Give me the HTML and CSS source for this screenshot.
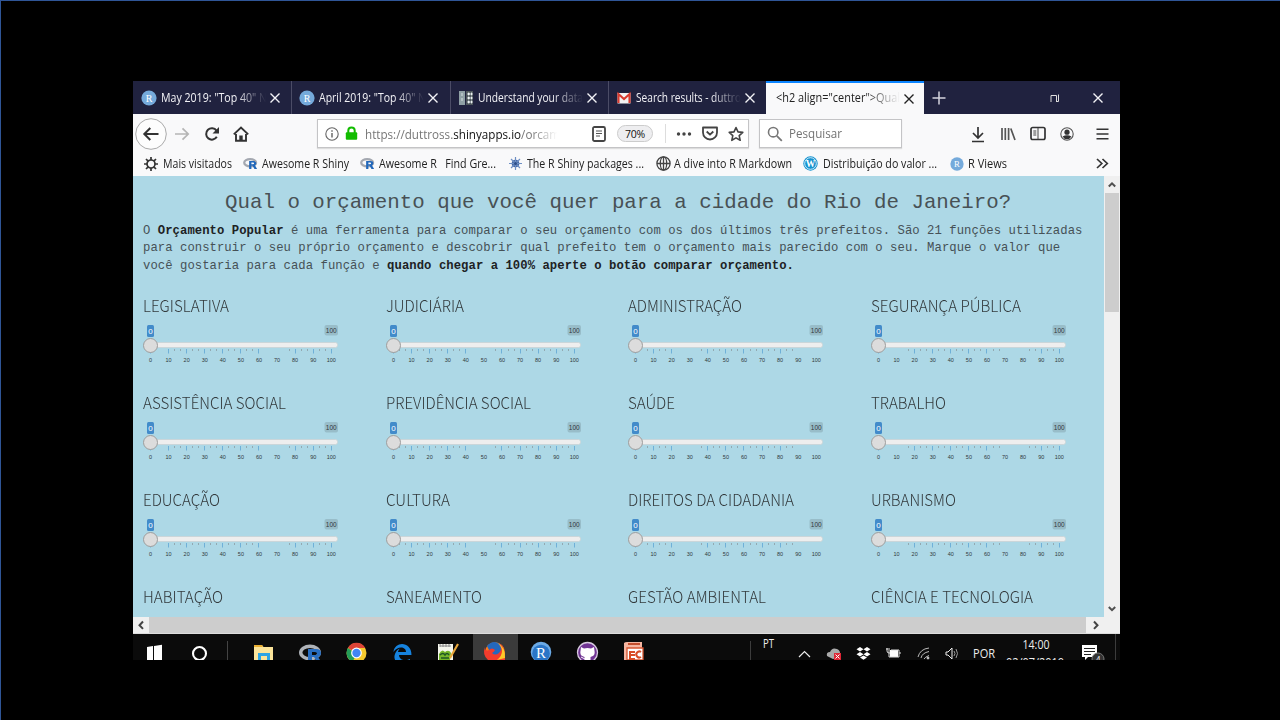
FILE: index.html
```html
<!DOCTYPE html>
<html lang="pt-BR">
<head>
<meta charset="utf-8">
<title>Orçamento Popular</title>
<link rel="stylesheet" href="styles.css">
</head>
<body>
<svg class="defs" width="0" height="0">
  <defs>
    <symbol id="x" viewBox="0 0 12 12"><path d="M1.5 1.5l9 9m0-9l-9 9" fill="none" stroke="currentColor" stroke-width="1.4"/></symbol>
    <symbol id="ball" viewBox="0 0 16 16"><circle cx="8" cy="8" r="7.6" fill="#75aadb"/><text x="8" y="11.6" text-anchor="middle" font-family="Liberation Serif,serif" font-size="10" fill="#fff">R</text></symbol>
    <symbol id="rlogo" viewBox="0 0 22 17"><ellipse cx="10.5" cy="7.3" rx="8.7" ry="5.3" fill="none" stroke="#a4a8b0" stroke-width="3.3"/><path d="M9 5h6.5q4 0 4 3.2 0 2.3-2 3l3.2 5.3h-3.8l-3.2-5h-1.4v5H9zM12.3 7.2v2.4h2.5q1.5 0 1.5-1.2t-1.5-1.2z" fill="#2167ba" fill-rule="evenodd"/></symbol>
  </defs>
</svg>
<main class="desktop">
  <header class="tabs">
    <div class="tab t1"><svg class="fav"><use href="#ball"/></svg><span class="label"><span data-w="106">May 2019: "Top 40" N</span></span><svg class="close"><use href="#x"/></svg></div>
    <div class="tab"><svg class="fav"><use href="#ball"/></svg><span class="label"><span data-w="107">April 2019: "Top 40" N</span></span><svg class="close"><use href="#x"/></svg></div>
    <div class="tab"><svg class="fav" viewBox="0 0 16 16"><path d="M1 1h6v14H1z" fill="#8fa0a5"/><path d="M8 1h7v14H8z" fill="#4d565b"/><path d="M4 3v3M4 8v3M10 3h1.3v2H10zm3 0h1v2h-1zM10 7h1.3v2H10zm3 0h1v2h-1zM10 11h1.3v2H10zm3 0h1v2h-1z" stroke="#e8f0f1" stroke-width=".8" fill="#fff"/></svg><span class="label"><span data-w="105">Understand your data</span></span><svg class="close"><use href="#x"/></svg></div>
    <div class="tab"><svg class="fav" viewBox="0 0 16 16"><path d="M1.5 3h13v10.500h-13z" fill="#f3f3f3"/><path d="M2.500 13V4L8 9l5.500-5v9" fill="none" stroke="#d93a2f" stroke-width="2.100"/></svg><span class="label"><span data-w="105">Search results - duttro</span></span><svg class="close"><use href="#x"/></svg></div>
    <div class="tab active"><span class="label"><span data-w="124">&lt;h2 align="center"&gt;Qual</span></span><svg class="close"><use href="#x"/></svg></div>
    <svg class="plus" viewBox="0 0 14 14"><path d="M7 .5v13M.5 7h13" stroke="#d4d4de" stroke-width="1.5"/></svg>
    <svg class="restore" viewBox="0 0 10 10"><path d="M1 9V2.500h5.500V9M6.500 8.500h2V1.500" fill="none" stroke="#ddd" stroke-width="1"/></svg>
    <svg class="quit"><use href="#x"/></svg>
  </header>
  <nav class="toolbar">
    <div class="navicons">
      <svg width="34" height="34" viewBox="0 0 34 34"><circle cx="17" cy="17" r="15.3" fill="#fdfdfd" stroke="#aaa"/><path d="M24.5 17H10.800M16.300 11l-6 6 6 6" fill="none" stroke="#333" stroke-width="2"/></svg>
      <svg width="18" height="16" viewBox="0 0 18 16"><path d="M2 8h13M9.500 2.300L15.200 8l-5.700 5.700" fill="none" stroke="#b5b5b5" stroke-width="1.700"/></svg>
      <svg class="reload" width="16" height="16" viewBox="0 0 16 16"><path d="M12.800 10.800A5.700 5.700 0 1 1 12.500 4.600" fill="none" stroke="#333" stroke-width="2"/><path d="M15 1v6.500H8.500z" fill="#333"/></svg>
      <svg class="home" width="16" height="16" viewBox="0 0 16 16"><path d="M.8 8.400L8 1.500l7.200 6.900M3 8v6.800h10V8" fill="none" stroke="#333" stroke-width="1.900"/><path d="M6.300 9.500h3.400V15H6.300z" fill="#333"/></svg>
    </div>
    <div class="urlbar">
      <svg width="14" height="14" viewBox="0 0 14 14"><circle cx="7" cy="7" r="6.2" fill="none" stroke="#666" stroke-width="1.1"/><path d="M7 6v4.500M7 3.200v1.500" stroke="#555" stroke-width="1.3"/></svg>
      <svg class="lock" width="13" height="15" viewBox="0 0 13 15"><path d="M3.300 7V4.500q0-3 3.200-3t3.200 3V7" fill="none" stroke="#12bc00" stroke-width="2"/><rect x=".8" y="6.300" width="11.400" height="7.500" rx="1" fill="#12bc00"/></svg>
      <span class="url"><span data-w="195">https://duttross.<b>shinyapps.io</b>/orcam</span></span>
      <svg class="reader" width="14" height="16" viewBox="0 0 14 16"><rect x="1" y="1" width="12" height="14" rx="1.500" fill="none" stroke="#444" stroke-width="1.800"/><path d="M4 5h6M4 7.500h6M4 10h4" stroke="#555"/></svg>
      <span class="pill">70%</span>
      <i class="rule"></i>
      <svg class="dots" width="16" height="4" viewBox="0 0 16 4"><circle cx="2.500" cy="2" r="1.700"/><circle cx="8" cy="2" r="1.700"/><circle cx="13.500" cy="2" r="1.700"/></svg>
      <svg class="pocket" width="16" height="15" viewBox="0 0 16 15"><path d="M1 1.500h14v5a7 7 0 0 1-14 0zM4.700 5.500L8 8.700l3.300-3.200" fill="none" stroke="#444" stroke-width="1.800" stroke-linejoin="round"/></svg>
      <svg class="star" width="16" height="16" viewBox="0 0 16 16"><path d="M8 1.500l2 4.400 4.800.5-3.600 3.200 1 4.700L8 11.900l-4.200 2.400 1-4.700L1.200 6.400 6 5.900z" fill="none" stroke="#444" stroke-width="1.600" stroke-linejoin="round"/></svg>
    </div>
    <div class="search"><svg width="16" height="16" viewBox="0 0 16 16"><circle cx="6.200" cy="6.200" r="4.700" fill="none" stroke="#777" stroke-width="1.600"/><path d="M9.800 9.800l5 5" stroke="#777" stroke-width="1.800"/></svg><span data-w="53">Pesquisar</span></div>
    <div class="tools">
      <svg width="14" height="18" viewBox="0 0 14 18"><path d="M7 2v11M2 8l5 5 5-5M1 16.500h12" fill="none" stroke="#333" stroke-width="1.700"/></svg>
      <svg class="lib" width="16" height="16" viewBox="0 0 16 16"><path d="M2 2v12M5.300 2v12M8.600 2v12M10.800 2.500L15 14" stroke="#555" stroke-width="1.700"/></svg>
      <svg class="side" width="16" height="15" viewBox="0 0 16 15"><rect x="1" y="1.500" width="14" height="12" rx="1.700" fill="none" stroke="#333" stroke-width="1.700"/><path d="M8 2v11M3.300 5h3M3.300 7h3M3.300 9h3" stroke="#444"/></svg>
      <svg class="acct" width="14" height="14" viewBox="0 0 14 14"><circle cx="7" cy="7" r="6.200" fill="none" stroke="#555" stroke-width="1.100"/><circle cx="7" cy="5.200" r="2.600" fill="#333"/><path d="M2.600 9.500q4.400-2.600 8.800 0Q10 12.200 7 12.200T2.600 9.500" fill="#333"/></svg>
      <svg class="menu" width="13" height="12" viewBox="0 0 13 12"><path d="M.5 1.200h12M.5 6h12M.5 10.800h12" stroke="#333" stroke-width="1.600"/></svg>
    </div>
  </nav>
  <nav class="bookmarks">
    <a class="m1"><svg width="14" height="14" viewBox="0 0 14 14"><circle cx="7" cy="7" r="4" fill="none" stroke="#333" stroke-width="1.700"/><path d="M7 0v3M7 11v3M0 7h3M11 7h3M2 2l2.200 2.200M9.800 9.800L12 12M12 2L9.800 4.200M4.200 9.800L2 12" stroke="#333" stroke-width="1.700"/></svg><span data-w="69">Mais visitados</span></a>
    <a class="m2"><svg width="15" height="13"><use href="#rlogo"/></svg><span data-w="87">Awesome R Shiny</span></a>
    <a class="m3"><svg width="15" height="13"><use href="#rlogo"/></svg><span data-w="117">Awesome R &nbsp; Find Gre...</span></a>
    <a class="m4"><svg width="13" height="13" viewBox="0 0 13 13"><circle cx="6.500" cy="6.500" r="3.800" fill="#4668a5"/><path d="M6.500 0v13M0 6.500h13M2 2l9 9M11 2l-9 9" stroke="#6e8fc4" stroke-width="1.200"/><circle cx="6.500" cy="6.500" r="1.500" fill="#2c4d88"/></svg><span data-w="117">The R Shiny packages ...</span></a>
    <a class="m5"><svg width="15" height="15" viewBox="0 0 15 15"><g fill="none" stroke="#444" stroke-width="1.300"><circle cx="7.500" cy="7.500" r="6.600"/><ellipse cx="7.500" cy="7.500" rx="3.200" ry="6.600"/><path d="M1 7.500h13M7.500 1v13"/></g></svg><span data-w="118">A dive into R Markdown</span></a>
    <a class="m6"><svg width="15" height="15" viewBox="0 0 15 15"><circle cx="7.500" cy="7.500" r="7.200" fill="#1593d0"/><circle cx="7.500" cy="7.500" r="5.800" fill="none" stroke="#fff" stroke-width=".8"/><text x="7.500" y="11.100" text-anchor="middle" font-family="Liberation Serif,serif" font-weight="bold" font-size="9.500" fill="#fff">W</text></svg><span data-w="114">Distribuição do valor ...</span></a>
    <a class="m7"><svg width="14" height="14"><use href="#ball"/></svg><span data-w="39">R Views</span></a>
    <svg class="more" width="13" height="11" viewBox="0 0 13 11"><path d="M1 1l4.800 4.500L1 10M6.500 1l4.800 4.500L6.500 10" fill="none" stroke="#333" stroke-width="1.700"/></svg>
  </nav>
  <section class="view">
    <article class="page">
      <h2>Qual o orçamento que você quer para a cidade do Rio de Janeiro?</h2>
      <p>O <b>Orçamento Popular</b> é uma ferramenta para comparar o seu orçamento com os dos últimos três prefeitos. São 21 funções utilizadas<br>para construir o seu próprio orçamento e descobrir qual prefeito tem o orçamento mais parecido com o seu. Marque o valor que<br>você gostaria para cada função e <b>quando chegar a 100% aperte o botão comparar orçamento.</b></p>
      <div class="grid" id="grid"></div>
    </article>
    <div class="vbar"><svg width="16" height="17" viewBox="0 0 16 17"><path d="M4.800 10.500L8 7.300l3.200 3.200" fill="none" stroke="#505050" stroke-width="2"/></svg><i></i><svg class="down" width="16" height="17" viewBox="0 0 16 17"><path d="M4.800 7L8 10.200 11.200 7" fill="none" stroke="#505050" stroke-width="2"/></svg></div>
  </section>
  <div class="hbar"><svg width="16" height="16" viewBox="0 0 16 16"><path d="M10 4.500L6.500 8.200l3.500 3.700" fill="none" stroke="#444" stroke-width="2"/></svg><i></i><svg width="19" height="16" viewBox="0 0 19 16"><path d="M8 4.500l3.500 3.700L8 11.900" fill="none" stroke="#444" stroke-width="2"/></svg><b></b></div>
  <footer class="taskbar">
    <svg viewBox="0 0 540 26" width="540" height="26">
      <rect x="340" width="45" height="26" fill="#3b3b3b"/>
      <path d="M14 13l6-1v14h-6zM21 12l8-1.200V26h-8z" fill="#fff"/>
      <circle cx="66.500" cy="19.500" r="6.500" fill="none" stroke="#fff" stroke-width="2.100"/>
      <path d="M94.500 7v19" stroke="#444"/>
      <path d="M121 26V11h8l1.500 2H140v13z" fill="#fbe49a"/><path d="M121 11h8l1 2h-9z" fill="#e8ae31"/><path d="M125 26v-7h12v7h-3v-4h-6v4z" fill="#2ca4e4"/>
      <ellipse cx="177" cy="18.500" rx="9.300" ry="6.300" fill="none" stroke="#aeb2b8" stroke-width="3.400"/><path d="M175 15h8q5 0 5 4 0 3-3 4l2 3h-4l-2-3h-2v3h-4zM179 18v3h3q2 0 2-1.500t-2-1.500z" fill="#286dc0" fill-rule="evenodd"/>
      <circle cx="223.500" cy="19" r="10" fill="#f5c92e"/><path d="M223.500 19L214.800 14A10 10 0 0 1 232.300 14H223.500z" fill="#dc4437"/><path d="M214.800 14A10 10 0 0 0 219.500 28L223.500 20z" fill="#249d58"/><circle cx="223.500" cy="19" r="5.400" fill="#fff"/><circle cx="223.500" cy="19" r="4.200" fill="#4285f4"/>
      <path d="M260.500 18c1-11 18-11 18 3h-12.500c0 5 6 6.500 11 4v4c-9 4-18-1-15-9 1-3 3-5 5-5.500-1 1-2 2.500-2 3.500h8c0-6-9-6-12.500 0z" fill="#1683df"/>
      <path d="M305 10h15v16h-15z" fill="#f5f6ed"/><path d="M307 12h11M307 10v3M310 10v3M313 10v3M316 10v3" stroke="#888"/><path d="M306 20q3-6 6-2 4-3 6 1l-1 7h-11z" fill="#75b62a"/><path d="M307 21q3-3 5 0 2-3 4 0M308 24h8" stroke="#205624" stroke-width="1.500" fill="none"/><path d="M325 10l-8 14" stroke="#e7a63a" stroke-width="2.200"/>
      <circle cx="362" cy="18" r="9.800" fill="#ff7b16"/><path d="M354 12q7-8 15 0 4 7-2 11-6 2-9-3z" fill="#2468bd"/><path d="M352 13q0 5 4 3 3-3 6 0-1 2-3 3 3 3 7 0 4-4 0-10 7 4 6 17h-17q-6-5-3-13z" fill="#f33c2d"/><path d="M363 8q10 5 9 16l-8 2q5-4 5-9t-6-9z" fill="#ffc928"/>
      <circle cx="408" cy="18" r="10.300" fill="#6baae6"/><circle cx="408" cy="19.500" r="8.800" fill="#2a75c7"/><text x="408" y="24" text-anchor="middle" font-family="Liberation Serif,serif" font-size="15" fill="#fff">R</text>
      <circle cx="454.500" cy="18.500" r="10" fill="#713494" stroke="#d8cbe0" stroke-width="1.300"/><path d="M448 13l3 1.500q3.500-1 7 0l3-1.500 .500 4q1 5-4 6V27h-6v-4q-5-1-4-6z" fill="#fff"/><path d="M448 23l4 2" stroke="#fff"/>
      <path d="M491 9q1-1 3-1h15v18h-18z" fill="#f6b5a0"/><path d="M495 10h12" stroke="#c44e2c" stroke-width="2"/><path d="M494 14h16v12h-16z" fill="#fff" stroke="#d65631" stroke-width="1.300"/><path d="M496 17h6v2h-4v1h4v2h-4v2h4v2h-6z" fill="#d84d26"/><path d="M508 18a3 3 0 1 0 0 5" fill="none" stroke="#d84d26" stroke-width="2"/>
    </svg>
    <svg class="tray" viewBox="740 634 380 26" width="380" height="26">
      <path d="M750.500 641v19M1115.500 634v26" stroke="#3c3c3c"/>
      <text x="763" y="648" font-size="12" textLength="11" lengthAdjust="spacingAndGlyphs">PT</text>
      <path d="M799 657l5.500-5.500 5.500 5.500" fill="none" stroke="#eee" stroke-width="1.200"/>
      <path d="M827 656q-1-4 3-4 2-5 7-3 4 1 3 8l-7 2z" fill="#aaa"/><rect x="834" y="653" width="7" height="7" fill="#df2636"/><path d="M835.500 654.500l4 4m0-4l-4 4" stroke="#fff"/>
      <path d="M860 647l3.500 2.200-3.500 2.200-3.500-2.200zM867 647l3.500 2.200-3.500 2.200-3.500-2.200zM860 652l3.500 2.200-3.500 2.200-3.500-2.200zM867 652l3.500 2.200-3.500 2.200-3.500-2.200zM863.500 655.500l3.500 2-3.500 2.300-3.500-2.300z" fill="#fff"/>
      <path d="M890 650h8v7h-8z" fill="#fff"/><path d="M887 648v3q0 2 2 2h1M886 649h4M889 650v7h10v-7h-8M900 652v2" fill="none" stroke="#ddd"/>
      <g fill="none" stroke="#bbb"><path d="M918 657q2-8 11-9M921 658q1-5 8-6.500M924 659q1-2 5-3.500"/><circle cx="928" cy="658" r="1" fill="#fff"/><path d="M946 652h2l4-4v11l-4-4h-2z" stroke="#eee"/><path d="M954 651q2 2.500 0 5M956 649q3 4.500 0 9" stroke="#999"/></g>
      <text x="973" y="658" font-size="12.500" textLength="22" lengthAdjust="spacingAndGlyphs">POR</text>
      <text x="1022.500" y="649" font-size="12" textLength="27" lengthAdjust="spacingAndGlyphs">14:00</text>
      <text x="1006" y="666.500" font-size="12" textLength="58" lengthAdjust="spacingAndGlyphs">02/07/2019</text>
      <path d="M1082 645h15v12h-9l-3 3v-3h-3z" fill="#fff"/><path d="M1084 648.500h11M1084 651.500h11M1084 654.500h7" stroke="#222"/><circle cx="1098" cy="659" r="6" fill="#333" stroke="#777"/><text x="1098" y="663" text-anchor="middle" font-size="9">4</text>
    </svg>
  </footer>
</main>
<script src="app.js"></script>
</body>
</html>
```
FILE: styles.css
```css
* { box-sizing: border-box; }
html, body { margin: 0; height: 720px; overflow: hidden; background: #000; }
body { border-top: 1px solid #2f5597; border-left: 1px solid #2f5597; font-family: "Open Sans", "Noto Sans", sans-serif; }
.defs { display: block; }
svg { flex: none; display: block; }
.desktop { margin: 80px 0 0 132px; width: 987px; height: 579px; overflow: hidden; display: flex; flex-direction: column; background: #f9f9fa; }
[data-w] { white-space: nowrap; display: inline-block; transform-origin: left center; }

.tabs { height: 33px; flex: none; background: #20223f; display: flex; align-items: center; color: #f3f3f7; }
.tab { width: 158.300px; height: 33px; flex: none; display: flex; align-items: center; padding-left: 7px; border-left: 1px solid #4b4c66; font-size: 12px; }
.tab.t1 { border-left-color: #20223f; }
.fav { width: 16px; height: 16px; }
.label { width: 105px; height: 20px; line-height: 20px; margin-left: 4px; overflow: hidden; -webkit-mask-image: linear-gradient(90deg, #000 72%, transparent 100%); mask-image: linear-gradient(90deg, #000 72%, transparent 100%); }
.close { width: 12px; height: 12px; margin-left: 3px; }
.tab.active { background: #f9f9fa; color: #222; border-left: 0; border-top: 2px solid #0a84ff; padding-left: 10px; }
.active .label { width: 124px; margin-left: 0; height: 22px; line-height: 20px; }
.plus { width: 14px; height: 14px; margin-left: 8px; }
.restore { width: 10px; height: 10px; margin-left: 104px; }
.quit { width: 12px; height: 12px; margin-left: 32px; }

.toolbar { height: 39px; flex: none; display: flex; align-items: center; }
.navicons { width: 184px; display: flex; align-items: center; padding-left: 1px; }
.navicons svg + svg { margin-left: 5px; }
.navicons .reload { margin-left: 13px; }
.navicons .home { margin-left: 13px; }
.urlbar { width: 432px; height: 29px; background: #fff; border: 1px solid #c4c4c6; box-shadow: 0 1px 1px #ddd; display: flex; align-items: center; padding-left: 7px; }
.lock { margin-left: 6px; }
.url { margin-left: 7px; width: 192px; overflow: hidden; font-size: 13.500px; line-height: 22px; color: #777; -webkit-mask-image: linear-gradient(90deg, #000 87%, transparent); mask-image: linear-gradient(90deg, #000 87%, transparent); }
.url b { font-weight: 400; color: #111; }
.reader { margin-left: 35px; }
.pill { margin-left: 11px; width: 36px; height: 17px; line-height: 16px; border: 1px solid #ccc; border-radius: 9px; background: #eeeef0; text-align: center; font-size: 10.500px; color: #111; letter-spacing: -.3px; }
.rule { width: 1px; height: 19px; background: #ddd; margin-left: 12px; }
.dots { margin-left: 10px; fill: #444; }
.pocket { margin-left: 10px; }
.star { margin-left: 10px; }
.search { margin-left: 10px; width: 143px; height: 29px; border: 1px solid #c4c4c6; box-shadow: 0 1px 1px #ddd; background: #fff; display: flex; align-items: center; padding-left: 7px; font-size: 12.500px; color: #737373; gap: 6px; }
.tools { display: flex; align-items: center; margin-left: 69px; }
.lib { margin-left: 15px; }
.side { margin-left: 14px; }
.acct { margin-left: 14px; }
.menu { margin-left: 22px; }

.bookmarks { flex: none; height: 23px; padding-bottom: 2px; display: flex; align-items: center; padding-left: 11px; font-size: 12px; color: #222; }
.bookmarks a { display: flex; align-items: center; gap: 5px; line-height: 18px; }
.bookmarks .m2, .bookmarks .m3 { gap: 4px; }
.m2 { margin-left: 11px; }
.m3 { margin-left: 11px; }
.m4 { margin-left: 13px; }
.m5 { margin-left: 12px; }
.bookmarks .m5 { gap: 3px; }
.m6 { margin-left: 11px; }
.m7 { margin-left: 13px; }
.bookmarks .m7 { gap: 4px; }
.more { margin-left: 89px; }

.view { height: 441px; flex: none; display: flex; }
.page { width: 971px; height: 441px; overflow: hidden; background: #add8e6; padding-left: 10px; }
.page h2 { margin: 13px 0 0 82px; height: 32px; font: 400 20.800px/28px "Liberation Mono", monospace; color: #485155; white-space: nowrap; }
.page p { margin: 2px 0 0; font: 12.250px/17.250px "Liberation Mono", monospace; letter-spacing: .046px; color: #465156; white-space: nowrap; }
.page p b { color: #1d2224; }
.grid { margin-top: 17px; display: grid; grid-template-columns: repeat(4, 242.700px); grid-auto-rows: 97.200px; }
.cell h4 { margin: 0 0 4px; height: 26px; font: 300 16.500px/26px "Noto Sans CJK SC", "Noto Sans CJK JP", sans-serif; color: #333a3d; white-space: nowrap; }
.slider text { font-family: "Liberation Sans", sans-serif; font-size: 5.500px; text-anchor: middle; fill: #30383b; }
.slider .from { fill: #fff; font-size: 8px; }
.slider .max { font-size: 6.500px; }
.vbar { width: 16px; height: 441px; background: #f0f0f0; display: flex; flex-direction: column; align-items: center; }
.vbar i { width: 14px; height: 119px; background: #cdcdcd; }
.vbar .down { margin-top: auto; }
.hbar { height: 17px; flex: none; display: flex; align-items: center; background: #f0f0f0; border-bottom: 1px solid #ddd; }
.hbar i { flex: 1; height: 16px; background: #cdcdcd; }
.hbar b { width: 15px; height: 16px; }
.taskbar { height: 26px; flex: none; background: #0b0b0b; display: flex; justify-content: space-between; }
.tray text { fill: #eee; font-family: "Open Sans", sans-serif; }
```
FILE: app.js
```js
const names = ["LEGISLATIVA", "JUDICIÁRIA", "ADMINISTRAÇÃO", "SEGURANÇA PÚBLICA",
  "ASSISTÊNCIA SOCIAL", "PREVIDÊNCIA SOCIAL", "SAÚDE", "TRABALHO",
  "EDUCAÇÃO", "CULTURA", "DIREITOS DA CIDADANIA", "URBANISMO",
  "HABITAÇÃO", "SANEAMENTO", "GESTÃO AMBIENTAL", "CIÊNCIA E TECNOLOGIA"];
const widths = [86, 78, 114, 150, 143, 145, 47, 75, 77, 64, 166, 85, 80, 96, 138, 162];
// Percent ranges of each column's scale that carry tick marks
const ranges = [[[10, 60], [76, 100]], [[3, 40], [56, 100]], [[6, 20], [36, 87]], [[16, 67], [83, 100]]];

function slider(col) {
  let s = '<svg class="slider" width="200" height="46" viewBox="0 0 200 46">';
  s += '<rect x="2" y="20.500" width="192.500" height="5" rx="2" fill="#eee" stroke="#c9d3d6" stroke-width=".8"/>';
  for (let i = 0; i <= 30; i++) {
    const v = i * 10 / 3, x = 7.5 + v * 1.808, major = i % 3 === 0;
    const on = v === 0 || ranges[col].some(r => v >= r[0] - .1 && v <= r[1] + .1);
    if (on) s += `<path d="M${Math.floor(x) + .5} 27v${major ? 4.5 : 2}" stroke="${major ? '#6fb0d8' : '#93a9b1'}"/>`;
    if (major) s += `<text x="${x}" y="39.500">${Math.round(v)}</text>`;
  }
  s += '<rect x="4" y="3" width="7" height="12" rx="1.500" fill="#428bca"/><text class="from" x="7.500" y="12">0</text>';
  s += '<rect x="181.500" y="3" width="13.500" height="10.500" rx="2" fill="#98bdc9"/><text class="max" x="188.200" y="10.500">100</text>';
  s += '<circle cx="7.500" cy="23.500" r="7" fill="#dcdcdc" stroke="#9d9d9d"/></svg>';
  return s;
}

// The last row shows only its headings above the fold
document.getElementById("grid").innerHTML = names.map((n, i) =>
  `<div class="cell"><h4><span data-w="${widths[i]}">${n}</span></h4>${i < 12 ? slider(i % 4) : ""}</div>`).join("");

// Condense each label to the width of its slot
document.querySelectorAll("[data-w]").forEach(el => {
  const w = el.getBoundingClientRect().width, target = +el.dataset.w;
  el.style.transform = `scaleX(${target / w})`;
  el.style.marginRight = target - w + "px";
});
```
